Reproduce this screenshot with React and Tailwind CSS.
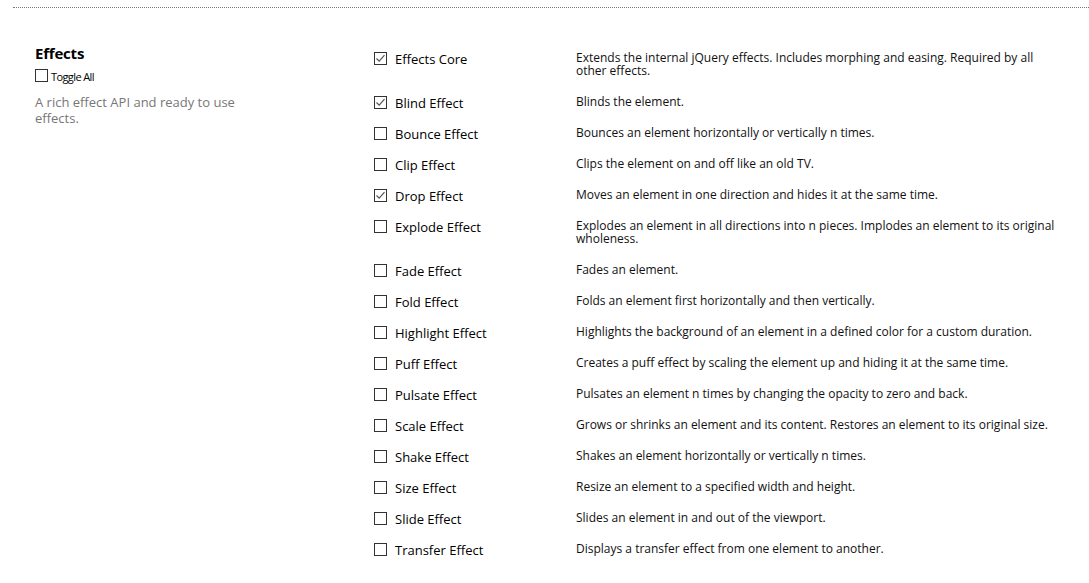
import React from 'react';

const effects = [
  { name: 'Effects Core', checked: true, desc: 'Extends the internal jQuery effects. Includes morphing and easing. Required by all other effects.' },
  { name: 'Blind Effect', checked: true, desc: 'Blinds the element.' },
  { name: 'Bounce Effect', desc: 'Bounces an element horizontally or vertically n times.' },
  { name: 'Clip Effect', desc: 'Clips the element on and off like an old TV.' },
  { name: 'Drop Effect', checked: true, desc: 'Moves an element in one direction and hides it at the same time.' },
  { name: 'Explode Effect', desc: 'Explodes an element in all directions into n pieces. Implodes an element to its original wholeness.' },
  { name: 'Fade Effect', desc: 'Fades an element.' },
  { name: 'Fold Effect', desc: 'Folds an element first horizontally and then vertically.' },
  { name: 'Highlight Effect', desc: 'Highlights the background of an element in a defined color for a custom duration.' },
  { name: 'Puff Effect', desc: 'Creates a puff effect by scaling the element up and hiding it at the same time.' },
  { name: 'Pulsate Effect', desc: 'Pulsates an element n times by changing the opacity to zero and back.' },
  { name: 'Scale Effect', desc: 'Grows or shrinks an element and its content. Restores an element to its original size.' },
  { name: 'Shake Effect', desc: 'Shakes an element horizontally or vertically n times.' },
  { name: 'Size Effect', desc: 'Resize an element to a specified width and height.' },
  { name: 'Slide Effect', desc: 'Slides an element in and out of the viewport.' },
  { name: 'Transfer Effect', desc: 'Displays a transfer effect from one element to another.' },
];

const Box = ({ checked }) => (
  <span className="w-[13px] h-[13px] border border-[#333] bg-white flex items-center justify-center shrink-0">
    {checked && (
      <svg width="11" height="11" viewBox="0 0 11 11">
        <path d="M1.5 5.5 L4.2 8.2 L9.5 2.2" fill="none" stroke="#555" strokeWidth="1.2" />
      </svg>
    )}
  </span>
);

export default function App() {
  return (
    <div className="bg-white min-h-[583px] text-black" style={{ fontFamily: '"Open Sans", sans-serif' }}>
      <div className="pt-[7px] pl-[13px]">
        <div className="border-t border-dotted border-[#777]" />
      </div>
      <div className="flex pl-[35px] pt-[34px]">
        <div className="w-[339px] shrink-0">
          <h2 className="text-[15px] leading-[18px] font-bold text-black tracking-[-0.2px] mt-[2px]">Effects</h2>
          <label className="flex items-center mt-[6px]">
            <Box />
            <span className="text-[11px] leading-[13px] tracking-[-0.6px] ml-[3px] mt-[2px]">Toggle All</span>
          </label>
          <p className="text-[13px] leading-[16px] text-[#777] mt-[11px] w-[210px]">
            A rich effect API and ready to use effects.
          </p>
        </div>
        <div className="flex flex-col">
          {effects.map((e) => (
            <div key={e.name} className="flex pt-[9px] pb-[9px]">
              <div className="w-[202px] h-[13px] flex items-start shrink-0">
                <span className="mt-[1px]"><Box checked={e.checked} /></span>
                <span className="ml-[8px] text-[13px] leading-[14px] mt-[1px]">{e.name}</span>
              </div>
              <p className="w-[489px] text-[12px] leading-[13px] text-[#111]">{e.desc}</p>
            </div>
          ))}
        </div>
      </div>
    </div>
  );
}
